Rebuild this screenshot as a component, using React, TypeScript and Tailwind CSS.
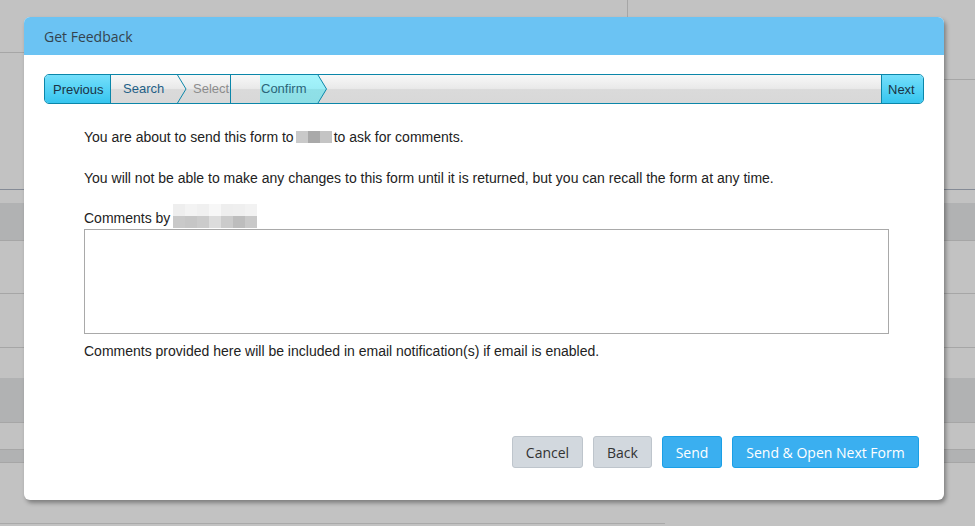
import React from "react";

const line = "border-b border-[#a6a6a6]";

// pixelated placeholder blocks standing in for redacted names
const Blur = ({ cols, className }: { cols: string[][]; className?: string }) => (
  <span className={"inline-flex flex-col " + (className ?? "")}>
    {cols.map((row, i) => (
      <span key={i} className="flex">
        {row.map((c, j) => (
          <span key={j} className="block h-[12px] w-[12px]" style={{ background: c }} />
        ))}
      </span>
    ))}
  </span>
);

const Backdrop = () => (
  <div className="flex h-[526px] w-full flex-col bg-[#c2c2c2]">
    <div className="flex h-[189px]">
      <div className="w-[628px] border-r border-[#a6a6a6]">
        <div className={"h-[53px] " + line} />
      </div>
      <div className="flex-1">
        <div className={"h-[80px] " + line} />
      </div>
    </div>
    <div className="h-[1px] bg-[#858b96]" />
    <div className="h-[13px]" />
    <div className={"h-[38px] bg-[#b1b2b3] " + line} />
    <div className={"h-[53px] " + line} />
    <div className={"h-[54px] " + line} />
    <div className="h-[30px]" />
    <div className={"h-[45px] bg-[#b1b2b3] " + line} />
    <div className={"h-[27px] " + line} />
    <div className={"h-[13px] bg-[#b1b2b3] " + line} />
    <div className="h-[60px]" />
    <div className="h-[1px] w-[665px] bg-[#a9a9a9]" />
  </div>
);

const Crumbs = () => (
  <div className="mx-5 mt-[19px] flex h-[30px] overflow-hidden rounded-[5px] border border-[#0b86a9] bg-[linear-gradient(to_bottom,#f8f8f8_0%,#e9e9e9_48%,#dadada_52%,#d8d8d8_100%)] font-['Liberation_Sans',Arial,sans-serif] text-[13px] leading-none">
    <div className="flex w-[66px] items-center border-r border-[#0b86a9] bg-[linear-gradient(to_bottom,#74dffb,#36c5ef)] pl-[8px] text-[#1b3344]">
      Previous
    </div>
    <div className="flex w-[66px] items-center pb-[2px] pl-[12px] text-[#1f5f86]">Search</div>
    <svg width="10" height="28" viewBox="0 0 10 28" className="shrink-0">
      <polyline points="0.5,0 9,14 0.5,28" fill="none" stroke="#0b86a9" strokeWidth="1" />
    </svg>
    <div className="flex w-[43px] items-center overflow-hidden whitespace-nowrap pb-[2px] pl-[6px] text-[#8c8c8c]">
      Select
    </div>
    <div className="w-[30px] border-l border-[#0b86a9]" />
    <div className="relative flex w-[67px] items-center pb-[2px] pl-[1px] text-[#2b6579]">
      <svg width="67" height="28" viewBox="0 0 67 28" className="absolute inset-0">
        <defs>
          <linearGradient id="cf" x1="0" y1="0" x2="0" y2="1">
            <stop offset="0" stopColor="#a6f5fc" />
            <stop offset="0.48" stopColor="#9cedf6" />
            <stop offset="0.52" stopColor="#8fe0e7" />
            <stop offset="1" stopColor="#8ddee5" />
          </linearGradient>
        </defs>
        <polygon points="0,0 58,0 66.5,14 58,28 0,28" fill="url(#cf)" />
        <polyline points="58,0 66.5,14 58,28" fill="none" stroke="#0b86a9" strokeWidth="1" />
      </svg>
      <span className="relative">Confirm</span>
    </div>
    <div className="flex-1" />
    <div className="flex w-[42px] items-center border-l border-[#0b86a9] bg-[linear-gradient(to_bottom,#74dffb,#36c5ef)] pl-[6px] text-[#1b3344]">
      Next
    </div>
  </div>
);

const btn =
  "flex h-[32px] items-center justify-center rounded-[3px] border text-[14px] font-['Open_Sans',sans-serif]";

export default function App() {
  return (
    <div className="relative h-[526px] w-full overflow-hidden">
      <Backdrop />
      <div className="absolute left-[24px] top-[17px] flex h-[483px] w-[920px] flex-col overflow-hidden rounded-[6px] bg-white shadow-[2px_3px_4px_rgba(0,0,0,0.35)]">
        <div className="flex h-[38px] shrink-0 items-center bg-[#6bc3f3] pl-[20px] font-['Open_Sans',sans-serif] text-[14px] text-[#34434f]">
          Get Feedback
        </div>
        <Crumbs />
        <div className="ml-[60px] w-[805px] font-['Liberation_Sans',Arial,sans-serif] text-[14px] leading-[16px] text-[#222]">
          <p className="mt-[25px] flex h-[16px] items-center">
            You are about to send this form to
            <Blur className="mx-[2px]" cols={[["#c9c9c9", "#a9a9a9", "#c4c4c4"]]} />
            to ask for comments.
          </p>
          <p className="mt-[25px]">
            You will not be able to make any changes to this form until it is returned, but you can recall the form at
            any time.
          </p>
          <p className="mt-[24px] flex h-[16px] items-start">
            Comments by
            <Blur
              className="ml-[3px] mt-[-6px]"
              cols={[
                ["#eeeeee", "#f3f3f3", "#f0f0f0", "#f7f7f7", "#eeeeee", "#efefef", "#f2f2f2"],
                ["#c9c9c9", "#c6c6c6", "#cbcbcb", "#dcdcdc", "#cbcbcb", "#bdbdbd", "#c9c9c9"],
              ]}
            />
          </p>
          <textarea className="mt-[3px] block h-[105px] w-[805px] resize-none border border-[#a9a9a9] outline-none" />
          <p className="mt-[9px]">Comments provided here will be included in email notification(s) if email is enabled.</p>
        </div>
        <div className="mt-auto flex justify-end gap-[10px] pb-[32px] pr-[25px]">
          <button className={btn + " w-[71px] border-[#bec5cc] bg-[#d2d8de] text-[#333]"}>Cancel</button>
          <button className={btn + " w-[59px] border-[#bec5cc] bg-[#d2d8de] text-[#333]"}>Back</button>
          <button className={btn + " w-[60px] border-[#1a9fe6] bg-[#3aaff0] text-white"}>Send</button>
          <button className={btn + " w-[187px] border-[#1a9fe6] bg-[#3aaff0] text-white"}>Send &amp; Open Next Form</button>
        </div>
      </div>
    </div>
  );
}
